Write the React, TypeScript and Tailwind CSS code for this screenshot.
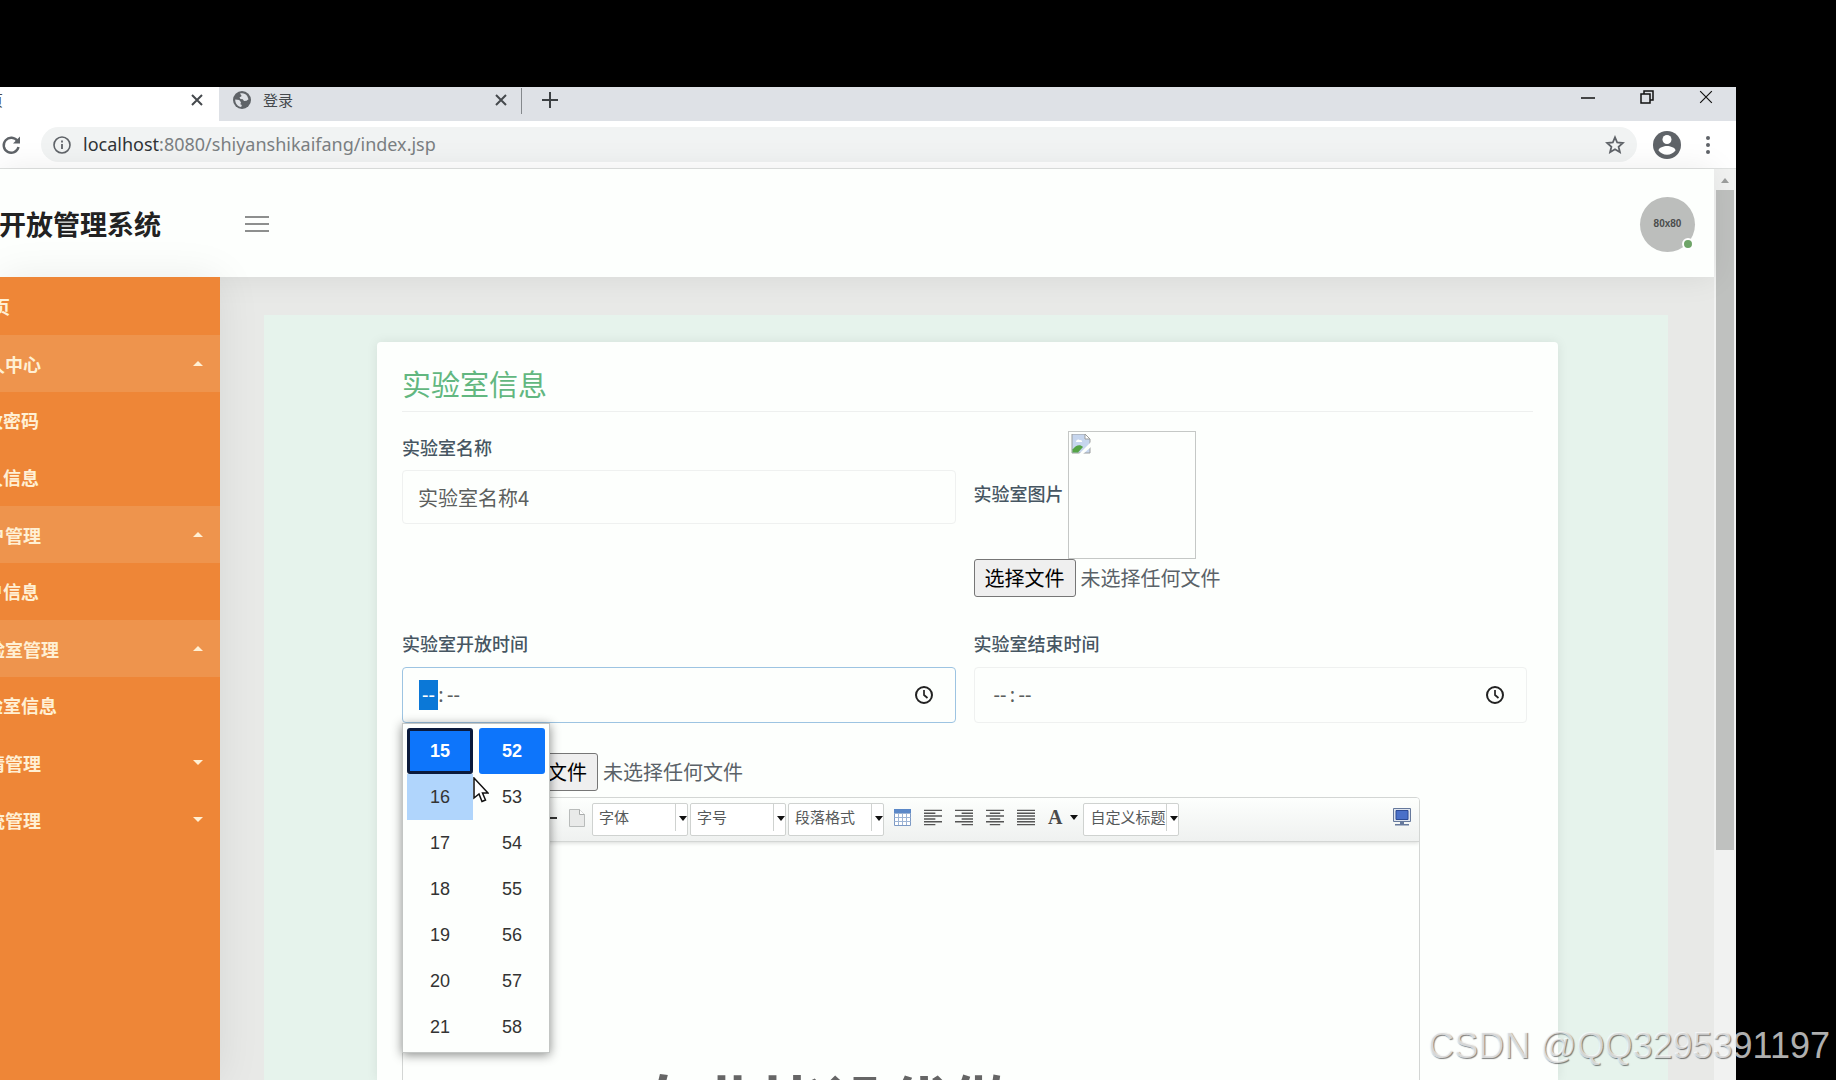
import type { ReactNode } from "react";
import { clsx } from "clsx";

type MenuItem = {
  label: string;
  kind: "home" | "group" | "child";
  open?: boolean;
};

const menu: MenuItem[] = [
  { label: "首页", kind: "home" },
  { label: "个人中心", kind: "group", open: true },
  { label: "修改密码", kind: "child" },
  { label: "个人信息", kind: "child" },
  { label: "用户管理", kind: "group", open: true },
  { label: "用户信息", kind: "child" },
  { label: "实验室管理", kind: "group", open: true },
  { label: "实验室信息", kind: "child" },
  { label: "申请管理", kind: "group" },
  { label: "系统管理", kind: "group" },
];

const hours = ["15", "16", "17", "18", "19", "20", "21"];
const minutes = ["52", "53", "54", "55", "56", "57", "58"];

function CloseIcon({ className }: { className: string }) {
  return (
    <svg viewBox="0 0 12 12" className={className} fill="none" stroke="currentColor">
      <path d="M1 1l10 10M11 1L1 11" />
    </svg>
  );
}

function TabStrip() {
  return (
    <div className="flex h-[34px] shrink-0 bg-[#dee1e6] text-[#45494d]">
      <div className="flex w-[219px] shrink-0 items-center justify-between bg-white pr-4 pb-2">
        <span className="-ml-3 text-[15px] leading-5">页</span>
        <button type="button" aria-label="关闭标签页">
          <CloseIcon className="size-3 stroke-2" />
        </button>
      </div>
      <div className="flex w-[302px] shrink-0 items-center pr-[14px] pb-2 pl-[14px]">
        <svg viewBox="0 0 18 18" className="size-[18px]">
          <circle cx="9" cy="9" r="9" fill="#5f6368" />
          <path d="M2.200 8.500l4 .6 1.800 2.200-.6 2 1.400.8-.6 1.800C4.600 15.700 2.100 12.500 2.200 8.500z" fill="#dee1e6" />
          <path d="M7 2.600c3-.8 5.500.1 7.200 2.400l1.300 3.300-2 1.400-2.500.3-1.200-1.700-2.300-.3-1-1.600 2.200-1.300z" fill="#dee1e6" />
        </svg>
        <span className="ml-3 flex-1 text-[15px] leading-5">登录</span>
        <button type="button" aria-label="关闭标签页">
          <CloseIcon className="size-3 stroke-2" />
        </button>
      </div>
      <div className="mt-px h-[26px] w-px bg-[#84888c]" />
      <button type="button" aria-label="新标签页" className="ml-5 h-[26px]">
        <svg viewBox="0 0 16 16" className="size-4" stroke="#3c4043" strokeWidth="2">
          <path d="M8 0v16M0 8h16" />
        </svg>
      </button>
      <div className="ml-auto flex h-[19px] items-center gap-[45px] pr-[23px] text-[#111]">
        <button type="button" aria-label="最小化">
          <svg viewBox="0 0 14 14" className="size-[14px]" stroke="currentColor" strokeWidth="1.500">
            <path d="M0 8h14" />
          </svg>
        </button>
        <button type="button" aria-label="还原">
          <svg viewBox="0 0 14 14" className="size-[14px]" fill="none" stroke="currentColor" strokeWidth="1.500">
            <path d="M1 4h9v9H1zM4 4V1h9v9h-3" />
          </svg>
        </button>
        <button type="button" aria-label="关闭">
          <CloseIcon className="size-[14px] stroke-1" />
        </button>
      </div>
    </div>
  );
}

function AddressBar() {
  return (
    <div className="flex h-12 shrink-0 items-center border-b border-[#dfe1e0] bg-white">
      <button type="button" aria-label="刷新" className="ml-px">
        <svg viewBox="0 0 20 20" className="size-5" fill="none" stroke="#5f6368" strokeWidth="2.400">
          <path d="M16.500 6.200A7.500 7.500 0 1 0 17.500 12" />
          <path d="M19 1.500v7h-7z" fill="#5f6368" stroke="none" />
        </svg>
      </button>
      <div className="ml-5 flex h-[35px] flex-1 items-center rounded-full bg-[#f1f3f3] pr-3 pl-3">
        <svg viewBox="0 0 18 18" className="size-[18px]" fill="none" stroke="#5f6368" strokeWidth="1.600">
          <circle cx="9" cy="9" r="8" />
          <path d="M9 8v5M9 4.500v2" strokeWidth="1.800" />
        </svg>
        <div className="ml-3 flex-1 pb-px font-['Noto_Sans'] text-[18px] leading-6 text-[#7b7f82]">
          <span className="text-[#303336]">localhost</span>:8080/shiyanshikaifang/index.jsp
        </div>
        <button type="button" aria-label="收藏">
          <svg viewBox="0 0 20 20" className="size-5" fill="none" stroke="#5f6368" strokeWidth="1.800">
            <path d="M10 2.300l2.200 5.200 5.600.5-4.200 3.700 1.300 5.500-4.900-2.900-4.900 2.900 1.300-5.500L2.200 8l5.600-.5z" />
          </svg>
        </button>
      </div>
      <button type="button" aria-label="账户" className="ml-4">
        <svg viewBox="0 0 28 28" className="size-7">
          <circle cx="14" cy="14" r="14" fill="#5f6368" />
          <circle cx="14" cy="8.500" r="4.500" fill="#fff" />
          <path d="M5.500 19.500c0-3 5.500-4.500 8.500-4.500s8.500 1.500 8.500 4.500c-2 2.700-5 4.200-8.500 4.200s-6.500-1.500-8.500-4.200z" fill="#fff" />
        </svg>
      </button>
      <button type="button" aria-label="菜单" className="mr-[26px] ml-[25px]">
        <svg viewBox="0 0 4 18" className="h-[18px] w-1" fill="#5f6368">
          <circle cx="2" cy="2" r="2" />
          <circle cx="2" cy="9" r="2" />
          <circle cx="2" cy="16" r="2" />
        </svg>
      </button>
    </div>
  );
}

function PageHeader() {
  return (
    <header className="relative z-10 flex h-[108px] shrink-0 items-center bg-[#fdfffd] pt-[2px] shadow-[0_0_30px_rgba(0,0,0,0.080)]">
      <h1 className="-ml-[82px] w-[327px] shrink-0 text-[27px] leading-9 font-bold whitespace-nowrap text-[#222]">
        实验室开放管理系统
      </h1>
      <button type="button" aria-label="折叠菜单" className="flex w-6 flex-col gap-[5px]">
        <span className="h-[2px] bg-[#8d8f8e]" />
        <span className="h-[2px] bg-[#8d8f8e]" />
        <span className="h-[2px] bg-[#8d8f8e]" />
      </button>
      <div className="relative mr-[19px] ml-auto flex size-[55px] items-center justify-center rounded-full bg-[#bcbebc]">
        <span className="font-['Liberation_Sans'] text-[10px] leading-4 font-bold text-[#4b4d4c]">80x80</span>
        <span className="absolute right-px bottom-[2px] size-3 rounded-full border-2 border-white bg-[#6fa568]" />
      </div>
    </header>
  );
}

function Sidebar() {
  return (
    <nav className="relative z-10 w-[220px] shrink-0 overflow-hidden bg-[#ee8637] pt-px shadow-[0_0_40px_rgba(0,0,0,0.080)]">
      {menu.map((item) => (
        <a
          key={item.label}
          href="#"
          className={clsx(
            "flex h-[57px] items-center justify-between pr-[17px] text-[18px] leading-6 font-bold text-[#fff0d4]",
            item.open && "bg-[#ee944d]",
            item.kind !== "group" && "pb-[2px]",
          )}
        >
          <span className={clsx("whitespace-nowrap", item.kind === "home" ? "-ml-[26px]" : item.kind === "child" ? "-ml-[33px]" : "-ml-[31px]")}>
            {item.label}
          </span>
          {item.kind === "group" ? (
            <svg viewBox="0 0 10 5" className="w-[10px]" fill="currentColor">
              <path d={item.open ? "M0 5l5-5 5 5z" : "M0 0l5 5 5-5z"} />
            </svg>
          ) : null}
        </a>
      ))}
    </nav>
  );
}

function FileField({ id, label }: { id: string; label: string }) {
  return (
    <label htmlFor={id} className="flex items-center text-[20px] leading-6 text-[#5a6268]">
      <input id={id} type="file" aria-label={label} className="sr-only" />
      <span className="flex h-[38px] w-[102px] shrink-0 items-center justify-center rounded-[3px] border border-[#767676] bg-[#efefef] text-black">
        选择文件
      </span>
      <span className="ml-[5px] whitespace-nowrap">未选择任何文件</span>
    </label>
  );
}

function TimeField({ id, label, active, children }: { id: string; label: string; active?: boolean; children?: ReactNode }) {
  return (
    <div>
      <label htmlFor={id} className="block text-[18px] leading-6 font-medium text-[#465662]">
        {label}
      </label>
      <div
        className={clsx(
          "relative mt-3 flex h-14 items-center rounded border bg-[#fdfffd] pr-[22px] pl-4 text-[20px] text-[#5c5f5e]",
          active ? "border-[#9dc4e2]" : "border-[#eff1f0]",
        )}
      >
        <input
          id={id}
          defaultValue="--"
          className={clsx("h-[30px] w-[19px] px-px text-center font-['Noto_Sans']", active && "bg-[#0b78d7] text-white")}
        />
        <span className="w-[6px] text-center font-['Noto_Sans']">:</span>
        <input aria-label={`${label} 分`} defaultValue="--" className="h-[30px] w-[19px] px-px text-center font-['Noto_Sans']" />
        <button type="button" aria-label="选择时间" className="ml-auto">
          <svg viewBox="0 0 18 18" className="size-[18px]" fill="none" stroke="#222" strokeWidth="2">
            <circle cx="9" cy="9" r="8" />
            <path d="M9 4v5l3.500 3" strokeWidth="1.700" />
          </svg>
        </button>
        {children}
      </div>
    </div>
  );
}

function TimeColumn({ values, focused }: { values: string[]; focused?: boolean }) {
  return (
    <div className="flex flex-1 flex-col">
      {values.map((value, index) => (
        <button
          key={value}
          type="button"
          className={clsx(
            "h-[46px] text-[18px]",
            index === 0 && "rounded-[3px] bg-[#0d75fb] font-bold text-white",
            index === 0 && focused && "border-[3px] border-[#0a1a3c]",
            index === 1 && focused && "bg-[#b0d5fc]",
            index > 0 && "text-[#333]",
          )}
        >
          {value}
        </button>
      ))}
    </div>
  );
}

function TimePopup() {
  return (
    <div className="absolute top-[55px] -left-px z-20 flex h-[330px] w-[148px] gap-[6px] overflow-hidden border border-[#c3c6c4] bg-[#fdfffd] px-1 pt-1 font-['Liberation_Sans'] shadow-[0_2px_10px_rgba(0,0,0,0.450)]">
      <TimeColumn values={hours} focused />
      <TimeColumn values={minutes} />
    </div>
  );
}

function ToolSelect({ label }: { label: string }) {
  return (
    <div className="relative flex h-[33px] w-24 shrink-0 items-start rounded-[2px] border border-[#cfd2d0] bg-white">
      <select aria-label={label} className="h-[27px] w-[83px] appearance-none overflow-hidden border-r border-[#cfd2d0] pl-[6px] text-[15px] text-[#56595a]">
        <option>{label}</option>
      </select>
      <DropArrow className="mt-3 ml-[3px]" />
    </div>
  );
}

function DropArrow({ className }: { className: string }) {
  return (
    <svg viewBox="0 0 8 5" className={clsx("h-[5px] w-2 shrink-0", className)}>
      <path d="M0 0h8L4 5z" fill="#111" />
    </svg>
  );
}

const alignments = [
  { name: "左对齐", path: "M0 1h19M0 4h12M0 7h19M0 10h12M0 13h19M0 16h12" },
  { name: "右对齐", path: "M0 1h19M7 4h12M0 7h19M7 10h12M0 13h19M7 16h12" },
  { name: "居中", path: "M0 1h19M4 4h11M0 7h19M4 10h11M0 13h19M4 16h11" },
  { name: "两端对齐", path: "M0 1h19M0 4h19M0 7h19M0 10h19M0 13h19M0 16h19" },
];

function EditorToolbar() {
  return (
    <div className="flex h-11 items-start border-b border-[#d3d6d4] bg-linear-to-b from-[#fdfffd] to-[#eff1f0] pt-[5px] pr-2 pl-[144px] shadow-[0_1px_4px_rgba(0,0,0,0.150)]">
      <button type="button" aria-label="分隔线" className="flex h-[30px] w-3 items-center">
        <svg viewBox="0 0 10 2" className="w-[10px]">
          <path d="M0 0h10v2H0z" fill="#333" />
        </svg>
      </button>
      <button type="button" aria-label="清空文档" className="ml-[10px] flex h-[30px] items-center">
        <svg viewBox="0 0 16 18" className="h-[18px] w-4">
          <path d="M.5.5h10l5 5v12H.5z" fill="#e9eae9" stroke="#b9bcbb" />
          <path d="M10.500.5v5h5" fill="#fff" stroke="#a9acab" />
        </svg>
      </button>
      <div className="ml-[7px] flex gap-[2px]">
        <ToolSelect label="字体" />
        <ToolSelect label="字号" />
        <ToolSelect label="段落格式" />
      </div>
      <div className="ml-[10px] flex h-7 items-center gap-[13px]">
        <button type="button" aria-label="插入表格">
          <svg viewBox="0 0 17 17" className="size-[17px]">
            <path d="M.5.5h16v16H.5z" fill="#fff" stroke="#7c99c4" />
            <path d="M.5 4.500h16M.5 8.500h16M.5 12.500h16M4.500 4v12M8.500 4v12M12.500 4v12" stroke="#9db4d4" />
            <path d="M0 0h17v4H0z" fill="#5b88c8" />
          </svg>
        </button>
        {alignments.map((item) => (
          <button key={item.name} type="button" aria-label={item.name}>
            <svg viewBox="0 0 19 17" className="h-[17px] w-[18px]" stroke="#555" strokeWidth="1.500">
              <path d={item.path} />
            </svg>
          </button>
        ))}
        <button type="button" aria-label="字体颜色" className="flex items-center gap-2 font-['Liberation_Serif'] text-[20px] leading-5 font-bold text-[#4a4a4a]">
          A
          <DropArrow className="" />
        </button>
      </div>
      <div className="ml-[5px]">
        <ToolSelect label="自定义标题" />
      </div>
      <button type="button" aria-label="全屏" className="ml-auto flex h-7 items-center">
        <svg viewBox="0 0 18 18" className="size-[18px]">
          <path d="M.5.5h17v13H.5z" fill="#dfe5ee" stroke="#66799c" />
          <path d="M3 2.500h12v9H3z" fill="#4a70c8" stroke="#2c4a94" />
          <path d="M7 14h4v2H7zM2 16h14v1.500H2z" fill="#66799c" />
        </svg>
      </button>
    </div>
  );
}

function BrokenImage() {
  return (
    <div className="h-32 w-32 border border-[#c5c8c6] p-[2px]" role="img" aria-label="实验室图片">
      <svg viewBox="0 0 20 20" className="size-5">
        <path d="M1 0h13l5 5v14H1z" fill="#c6d6ee" stroke="#9b9e9d" />
        <path d="M14 0v5h5z" fill="#fff" stroke="#9b9e9d" />
        <path d="M5 8c0-2 2-3 3.500-2 2-.5 3 1 2.500 2z" fill="#fff" />
        <path d="M1.500 18.500v-3C5 11 9 10 12 13l-5 5.500z" fill="#55a446" />
        <path d="M20 8L8 20h4l8-7z" fill="#fdfffd" />
      </svg>
    </div>
  );
}

function LabForm() {
  return (
    <form className="flex-1 rounded-t bg-[#fdfffd] px-[25px] pt-[23px] shadow-[0_0_12px_rgba(0,0,0,0.080)]">
      <h2 className="text-[29px] leading-9 text-[#62b780]">实验室信息</h2>
      <hr className="mt-[10px] border-[#eef0ef]" />
      <div className="mt-[19px] grid grid-cols-2 gap-x-[18px] pr-[6px]">
        <div className="pt-1">
          <label htmlFor="lab-name" className="block text-[18px] leading-6 font-medium text-[#465662]">
            实验室名称
          </label>
          <input
            id="lab-name"
            defaultValue="实验室名称4"
            className="mt-[11px] h-[54px] w-full rounded border border-[#eff1f0] px-[15px] text-[20px] text-[#5c5f5e]"
          />
        </div>
        <div>
          <div className="flex items-center gap-1">
            <span className="pb-1 text-[18px] leading-6 font-medium text-[#465662]">实验室图片</span>
            <BrokenImage />
          </div>
          <FileField id="lab-image" label="实验室图片" />
        </div>
      </div>
      <div className="mt-[34px] grid grid-cols-2 gap-x-[18px] pr-[6px]">
        <TimeField id="open-time" label="实验室开放时间" active>
          <TimePopup />
          <svg viewBox="0 0 16 26" className="absolute top-[109px] left-[70px] z-30 h-[26px] w-4">
            <path d="M1 1v20l5-4 3 7.500 3.500-1.500-3-7H15z" fill="#fff" stroke="#111" strokeWidth="1.500" />
          </svg>
        </TimeField>
        <TimeField id="close-time" label="实验室结束时间" />
      </div>
      <div className="mt-[30px] pl-[94px]">
        <FileField id="attachment" label="附件" />
      </div>
      <div className="mt-[6px] h-[420px] w-[90%] overflow-hidden rounded-t border border-[#d3d6d4]">
        <EditorToolbar />
      </div>
    </form>
  );
}

function Scrollbar() {
  return (
    <div className="flex w-[22px] shrink-0 flex-col bg-[#f1f2f1] px-[2px]">
      <svg viewBox="0 0 18 21" className="h-[21px]">
        <path d="M5 14l4-5 4 5z" fill="#9c9e9d" />
      </svg>
      <div className="h-[660px] bg-[#bfc1bf]" />
    </div>
  );
}

export default function App() {
  return (
    <div className="relative h-screen overflow-hidden bg-black pt-[87px] pr-[100px] font-['Noto_Sans_CJK_SC',sans-serif]">
      <div className="flex h-full flex-col overflow-hidden bg-[#e8e9e7]">
        <TabStrip />
        <AddressBar />
        <div className="flex min-h-0 flex-1">
          <div className="flex min-w-0 flex-1 flex-col">
            <PageHeader />
            <div className="flex min-h-0 flex-1">
              <Sidebar />
              <main className="flex min-w-0 flex-1 pt-[38px] pr-[46px] pl-11">
                <div className="flex flex-1 bg-[#e6f3ec] pt-[27px] pr-[110px] pl-[113px]">
                  <LabForm />
                </div>
              </main>
            </div>
          </div>
          <Scrollbar />
        </div>
      </div>
      <p className="absolute top-[1061px] left-[635px] text-[63px] leading-[80px] font-bold whitespace-nowrap text-[#666]">专业毕设代做</p>
      <p className="absolute right-[6px] bottom-[14px] font-['Liberation_Sans'] text-[36px] leading-10 whitespace-nowrap text-white/70 [text-shadow:1px_1px_1px_rgba(0,0,0,0.500)]">
        CSDN @QQ3295391197
      </p>
    </div>
  );
}
